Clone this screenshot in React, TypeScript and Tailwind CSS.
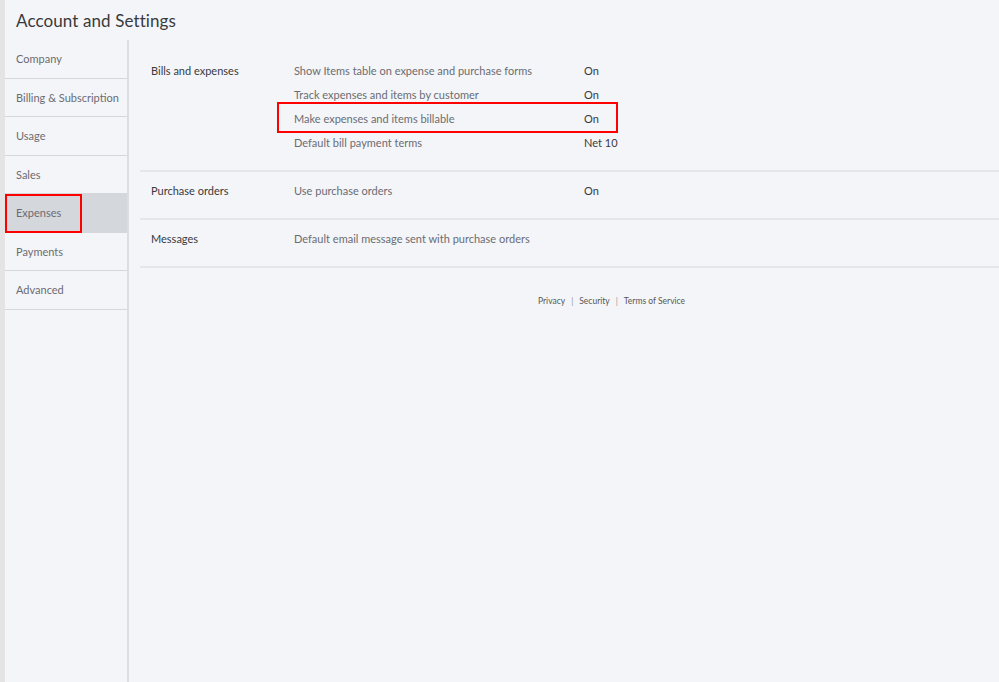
import React from 'react';

const navItems = ['Company', 'Billing & Subscription', 'Usage', 'Sales', 'Expenses', 'Payments', 'Advanced'];

type Row = { label: string; value?: string; flagged?: boolean };
type Section = { title: string; rows: Row[] };

const sections: Section[] = [
  {
    title: 'Bills and expenses',
    rows: [
      { label: 'Show Items table on expense and purchase forms', value: 'On' },
      { label: 'Track expenses and items by customer', value: 'On' },
      { label: 'Make expenses and items billable', value: 'On', flagged: true },
      { label: 'Default bill payment terms', value: 'Net 10' },
    ],
  },
  { title: 'Purchase orders', rows: [{ label: 'Use purchase orders', value: 'On' }] },
  { title: 'Messages', rows: [{ label: 'Default email message sent with purchase orders' }] },
];

export default function App() {
  return (
    <div className="flex h-[682px] w-[999px] overflow-hidden bg-[#f4f5f8] font-['Lato',sans-serif] text-[#393a3d]">
      {/* left grey strip */}
      <div className="w-[5px] shrink-0 bg-[#e4e4e4]" />

      <div className="flex min-w-0 flex-1 flex-col">
        <div className="flex h-[40px] items-center pl-[11px]">
          <h1 className="text-[17px] leading-none tracking-[0.1px] text-[#393a3d]">Account and Settings</h1>
        </div>

        <div className="flex flex-1">
          {/* Sidebar */}
          <div className="w-[124px] shrink-0 border-r-2 border-[#dcdde0]">
            {navItems.map((item) => (
              <div
                key={item}
                className={`relative flex h-[38.5px] items-center border-b border-[#d6d7da] pl-[11px] pt-[1px] text-[11px] text-[#6b6c72] ${
                  item === 'Expenses' ? 'bg-[#d4d7dc]' : ''
                }`}
              >
                {item}
                {item === 'Expenses' && (
                  <div className="pointer-events-none absolute left-0 top-0 h-[39px] w-[77px] border-2 border-[#ff0000]" />
                )}
              </div>
            ))}
          </div>

          {/* Content */}
          <div className="flex-1 pl-[11px] pt-[12px]">
            {sections.map((s) => (
              <div key={s.title} className="flex border-b-2 border-[#e4e6ea] pb-[15px] pt-[7px] text-[11px]">
                <div className="w-[154px] shrink-0 pl-[11px] leading-[24px] text-[#393a3d]">{s.title}</div>
                <div className="flex-1">
                  {s.rows.map((r) => (
                    <div key={r.label} className="relative flex leading-[24px]">
                      <div className="w-[290px] shrink-0 text-[#6b6c72]">{r.label}</div>
                      <div className="text-[#393a3d]">{r.value}</div>
                      {r.flagged && (
                        <div className="pointer-events-none absolute left-[-17px] top-[-5px] h-[31px] w-[341px] border-2 border-[#ff0000]" />
                      )}
                    </div>
                  ))}
                </div>
              </div>
            ))}

            <div className="ml-[398px] mt-[27px] flex items-center gap-[6px] text-[8.5px] text-[#555]">
              <span>Privacy</span>
              <span className="text-[#999]">|</span>
              <span>Security</span>
              <span className="text-[#999]">|</span>
              <span>Terms of Service</span>
            </div>
          </div>
        </div>
      </div>
    </div>
  );
}
